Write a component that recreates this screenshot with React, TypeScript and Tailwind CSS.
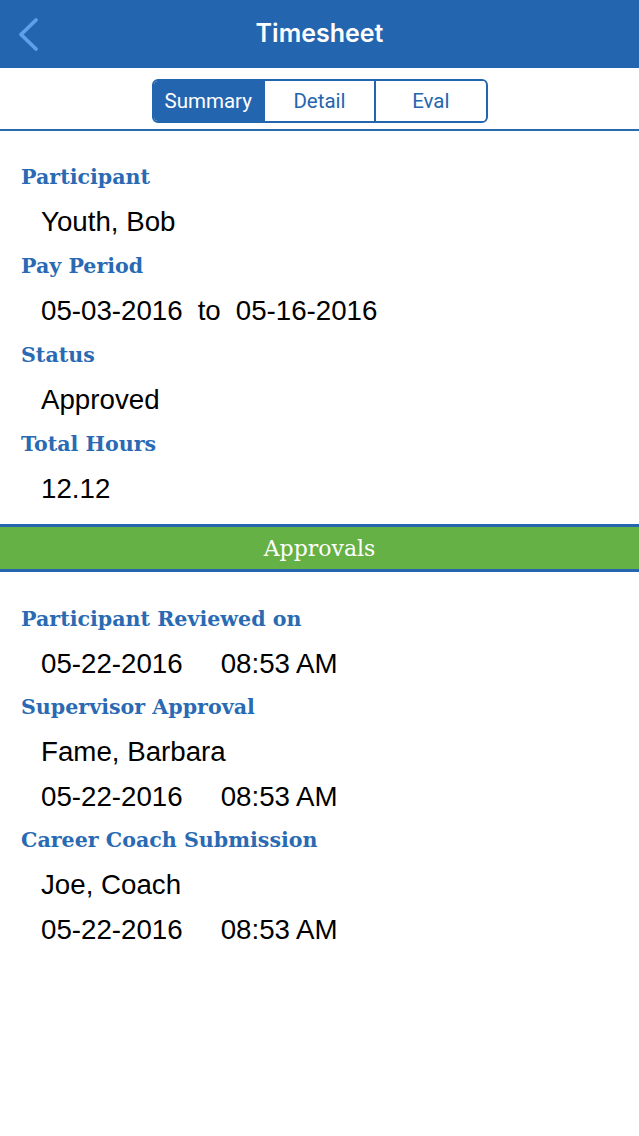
import React from 'react'

const labelFont = { fontFamily: '"DejaVu Serif", serif' }

function Label({ children, h = 'h-[44px]' }: { children: React.ReactNode; h?: string }) {
  return (
    <div className={`${h} flex items-center pl-[21px] text-[20.6px] font-bold text-[#2a6ab3]`} style={labelFont}>
      {children}
    </div>
  )
}

function Value({ children }: { children: React.ReactNode }) {
  return (
    <div className="h-[45px] flex items-center pl-[41px] text-[27.7px] text-black font-['Liberation_Sans',Arial,sans-serif]">
      {children}
    </div>
  )
}

function DateTime({ date, time }: { date: string; time: string }) {
  return (
    <Value>
      <span>{date}</span>
      <span className="ml-[38px]">{time}</span>
    </Value>
  )
}

export default function App() {
  const tabs = ['Summary', 'Detail', 'Eval']

  return (
    <div className="w-[639px] h-[1136px] bg-white overflow-hidden">
      <header className="h-[68px] bg-[#2465b0] flex items-center relative">
        <button className="absolute left-[17px] top-[17px] w-[23px] h-[35px] flex items-center justify-center">
          <svg width="23" height="35" viewBox="0 0 23 35" fill="none">
            <path d="M19 3 L4 17.5 L19 32" stroke="#5fa0e8" strokeWidth="3.8" strokeLinecap="round" strokeLinejoin="round" />
          </svg>
        </button>
        <h1 className="w-full text-center text-white text-[25px] font-semibold font-['Inter',sans-serif]">Timesheet</h1>
      </header>

      <div className="h-[63px] flex justify-center border-b-2 border-[#2a6ab3] pt-[11px]">
        <div className="flex w-[336px] h-[44px] rounded-[6px] border-2 border-[#2465b0] overflow-hidden">
          {tabs.map((t, i) => (
            <div
              key={t}
              className={`flex-1 flex items-center justify-center text-[20.5px] font-['Roboto',sans-serif] ${
                i === 0 ? 'bg-[#2465b0] text-white' : 'bg-white text-[#2465b0]'
              } ${i > 0 ? 'border-l-2 border-[#2465b0]' : ''}`}
            >
              {t}
            </div>
          ))}
        </div>
      </div>

      <section className="pt-[24px] pb-[13px]">
        <Label>Participant</Label>
        <Value>Youth, Bob</Value>
        <Label>Pay Period</Label>
        <Value>
          <span>05-03-2016</span>
          <span className="ml-[15px]">to</span>
          <span className="ml-[15px]">05-16-2016</span>
        </Value>
        <Label>Status</Label>
        <Value>Approved</Value>
        <Label>Total Hours</Label>
        <Value>12.12</Value>
      </section>

      <div className="h-[48px] bg-[#65b146] border-y-[3px] border-[#2465b0] flex items-center justify-center">
        <span className="text-white text-[22px]" style={labelFont}>Approvals</span>
      </div>

      <section className="pt-[26px]">
        <Label h="h-[43px]">Participant Reviewed on</Label>
        <DateTime date="05-22-2016" time="08:53 AM" />
        <Label h="h-[43px]">Supervisor Approval</Label>
        <Value>Fame, Barbara</Value>
        <DateTime date="05-22-2016" time="08:53 AM" />
        <Label h="h-[43px]">Career Coach Submission</Label>
        <Value>Joe, Coach</Value>
        <DateTime date="05-22-2016" time="08:53 AM" />
      </section>
    </div>
  )
}
